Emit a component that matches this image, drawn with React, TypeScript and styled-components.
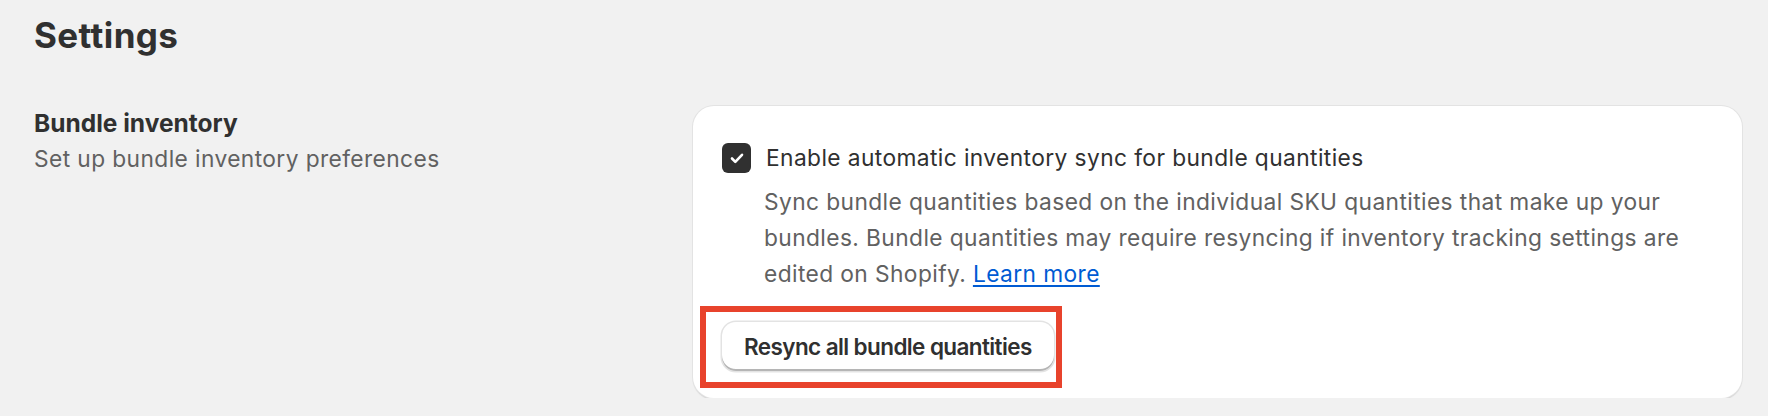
import React from 'react';
import styled, { createGlobalStyle } from 'styled-components';

const GlobalStyle = createGlobalStyle`
  html, body {
    margin: 0;
    padding: 0;
    background: #f1f1f1;
  }
  body {
    font-family: Inter, "Noto Sans", sans-serif;
    color: #303030;
    -webkit-font-smoothing: antialiased;
  }
`;

const Page = styled.div`
  padding: 14px 26px 0 34px;
`;

const PageTitle = styled.h1`
  margin: 0 0 50px;
  font-size: 35px;
  line-height: 42px;
  font-weight: 700;
  letter-spacing: 0.4px;
  color: #303030;
`;

const Section = styled.div`
  display: grid;
  grid-template-columns: 631px 1fr;
  column-gap: 28px;
  align-items: start;
`;

const Intro = styled.div`
  display: flex;
  flex-direction: column;
`;

const SectionTitle = styled.h2`
  margin: 0;
  font-size: 24.5px;
  line-height: 35px;
  font-weight: 650;
  color: #303030;
`;

const Subdued = styled.p`
  margin: 0;
  font-size: 22.75px;
  line-height: 35px;
  letter-spacing: 0.4px;
  color: #616161;
`;

const Card = styled.div`
  background: #ffffff;
  border-radius: 21px;
  box-shadow: 0 0 0 1px #e3e3e3, 0 2px 1px 0 #d4d4d4;
  padding: 34px 28px 27px 29px;
`;

const CheckRow = styled.label`
  display: flex;
  align-items: center;
  gap: 15px;
  font-size: 22.75px;
  line-height: 35px;
  letter-spacing: 0.4px;
  color: #303030;
`;

const Box = styled.span`
  flex: none;
  width: 29px;
  height: 30px;
  border-radius: 6px;
  background: #303030;
  display: flex;
  align-items: center;
  justify-content: center;
`;

const HelpText = styled(Subdued)`
  margin: 9px 0 0 42px;
  line-height: 36px;
  max-width: 960px;
`;

const Link = styled.a`
  color: #005bd3;
  text-decoration: underline;
  text-underline-offset: 3px;
`;

const Actions = styled.div`
  margin-top: 30px;
  display: flex;
`;

const Marked = styled.div`
  position: relative;
`;

const Highlight = styled.span`
  position: absolute;
  left: -22px;
  top: -16px;
  right: -8px;
  bottom: -17px;
  border: 6px solid #e8432c;
  pointer-events: none;
`;

const Button = styled.button`
  font-family: Inter, "Noto Sans", sans-serif;
  font-size: 22.5px;
  font-weight: 580;
  letter-spacing: -0.6px;
  line-height: 35px;
  color: #303030;
  background: #ffffff;
  border: none;
  border-radius: 14px;
  height: 49px;
  padding: 0 22px;
  box-shadow: 0 0 0 1.5px #e3e3e3, inset 0 -2px 0 0 #b5b5b5;
  cursor: pointer;
`;

function CheckIcon() {
  return (
    <svg width="18" height="18" viewBox="0 0 18 18" fill="none">
      <path
        d="M4 9.5l3.3 3.3L14 5.8"
        stroke="#fff"
        strokeWidth="2.6"
        strokeLinecap="round"
        strokeLinejoin="round"
      />
    </svg>
  );
}

export default function App() {
  return (
    <>
      <GlobalStyle />
      <Page>
        <PageTitle>Settings</PageTitle>
        <Section>
          <Intro>
            <SectionTitle>Bundle inventory</SectionTitle>
            <Subdued>Set up bundle inventory preferences</Subdued>
          </Intro>
          <Card>
            <CheckRow>
              <Box>
                <CheckIcon />
              </Box>
              Enable automatic inventory sync for bundle quantities
            </CheckRow>
            <HelpText>
              Sync bundle quantities based on the individual SKU quantities that make up your
              bundles. Bundle quantities may require resyncing if inventory tracking settings are
              edited on Shopify. <Link href="#">Learn more</Link>
            </HelpText>
            <Actions>
              <Marked>
                <Button>Resync all bundle quantities</Button>
                <Highlight />
              </Marked>
            </Actions>
          </Card>
        </Section>
      </Page>
    </>
  );
}
